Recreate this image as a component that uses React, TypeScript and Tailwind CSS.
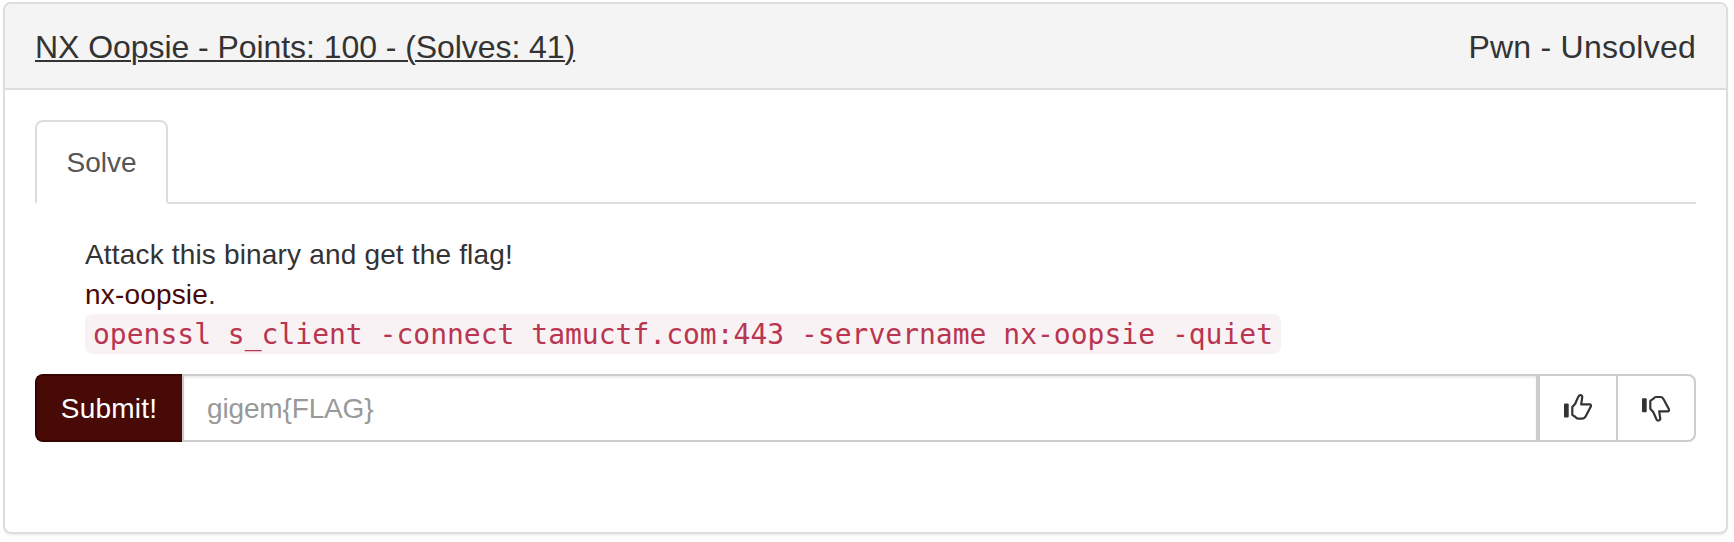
const helvetica = "font-['Liberation_Sans',Arial,sans-serif]";

function Thumb({ down = false }: { down?: boolean }) {
  return (
    <svg width="28" height="28" viewBox="0 0 28 28" fill="none" aria-hidden="true">
      <g transform={down ? "matrix(1 0 0 -1 0 27.7)" : undefined}>
        <rect x="0" y="9.400" width="4.700" height="14" rx="1" fill="#333" />
        <path
          d="M16.200 1.100c1.500 0 2.200 1 2 2.400L17.200 10.400h8.300c1.400 0 1.800 1 1.300 2.200L22 21.800c-1.100 2.100-2 2.900-3.600 2.900h-4.200c-1.300 0-2-.5-2.700-1.700L8.300 20.800V13L11.200 9.800 14 3.400c.6-1.500 1-2.300 2.200-2.300z"
          stroke="#333"
          strokeWidth="2.200"
          strokeLinejoin="round"
        />
      </g>
    </svg>
  );
}

export default function App() {
  return (
    <div className={`h-[542px] bg-white pt-[2px] pl-[3px] text-[28px] leading-[40px] text-[#333] ${helvetica}`}>
      <div className="h-[532px] w-[1725px] rounded-lg border-2 border-[#ddd] bg-white shadow-[0_2px_2px_rgba(0,0,0,0.05)]">
        <div className="flex h-[86px] items-center justify-between rounded-t-md border-b-2 border-[#ddd] bg-[#f4f4f4] px-[30px] pt-[2px] text-[32px]">
          <a className="tracking-[-0.06px] underline decoration-2 underline-offset-[2px]">
            NX Oopsie - Points: 100 - (Solves: 41)
          </a>
          <span className="tracking-[0.25px]">Pwn - Unsolved</span>
        </div>
        <div className="px-[30px] pt-[30px]">
          <div className="flex border-b-2 border-[#ddd]">
            <div className="-mb-[2px] h-[84px] w-[133px] rounded-t-lg border-2 border-[#ddd] border-b-white bg-white pt-[21px] text-center text-[#555]">
              Solve
            </div>
          </div>
          <div className="pt-[31px] pl-[50px] tracking-[0.17px]">
            <p>Attack this binary and get the flag!</p>
            <p>
              <a className="text-[#480a06]">nx-oopsie</a>.
            </p>
            <code className="-mt-px block h-10 w-[1196px] rounded-lg bg-[#f8f2f4] px-2 pt-px font-['DejaVu_Sans_Mono',monospace] text-[28px] leading-[40px] tracking-normal whitespace-pre text-[#b93550]">
              openssl s_client -connect tamuctf.com:443 -servername nx-oopsie -quiet
            </code>
          </div>
          <div className="mt-5 flex h-[68px]">
            <button className="w-[147px] rounded-l-lg border-2 border-r-0 border-[#370302] bg-[#480a06] pt-[2px] pr-[1px] tracking-[0.2px] text-white">
              Submit!
            </button>
            <input
              className="min-w-0 flex-1 border-2 border-[#ccc] px-[23px] pt-[2px] tracking-[-0.15px] shadow-[inset_0_2px_2px_rgba(0,0,0,0.075)] placeholder:text-[#999]"
              placeholder="gigem{FLAG}"
            />
            <button className="flex w-[78px] items-center justify-center border-2 border-r-0 border-[#ccc]">
              <Thumb />
            </button>
            <button className="flex w-[80px] items-center justify-center rounded-r-lg border-2 border-[#ccc]">
              <Thumb down />
            </button>
          </div>
        </div>
      </div>
    </div>
  );
}
